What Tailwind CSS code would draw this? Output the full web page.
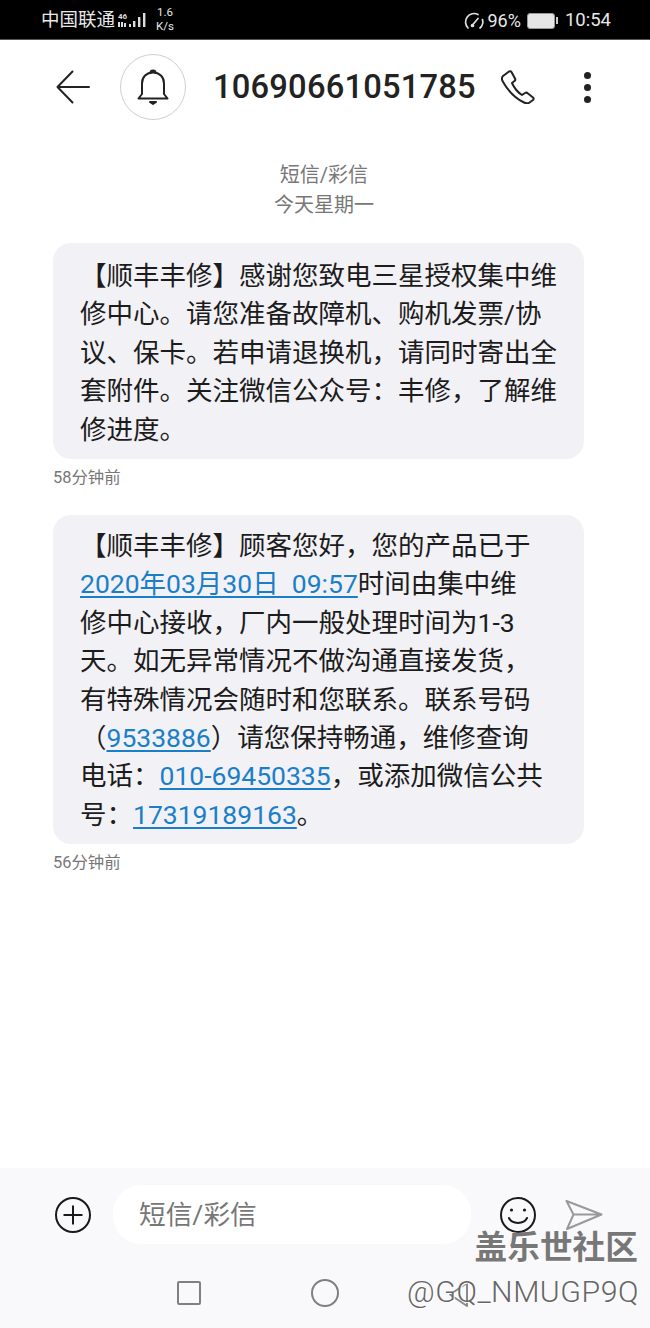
<!DOCTYPE html>
<html lang="zh">
<head>
<meta charset="utf-8">
<script src="https://cdn.jsdelivr.net/npm/@tailwindcss/browser@4"></script>
</head>
<body class="m-0 bg-white">
<div class="relative w-[650px] h-[1328px] flex flex-col overflow-hidden bg-white text-[#1c1c1c] font-['Roboto','Noto_Sans_CJK_SC',sans-serif]">
  <!-- status bar -->
  <div class="h-10 shrink-0 bg-black border-b border-[#555] flex items-center text-[#e8e8e8] pl-[41px] pr-[39px] pt-[2px]">
    <span class="text-[18.5px] leading-none">中国联通</span>
    <svg class="ml-[3px]" width="29" height="20" viewBox="0 0 29 20" fill="#ddd"><text x="0" y="8" font-size="8" font-weight="700" font-family="Roboto">46</text><rect x="0" y="11" width="2" height="5"/><rect x="3" y="11" width="2" height="5"/><rect x="6" y="12" width="2" height="4"/><rect x="11" y="13" width="2" height="3"/><rect x="15" y="10" width="2.4" height="6"/><rect x="20" y="6" width="2.4" height="10"/><rect x="25" y="2" width="2.4" height="14"/></svg>
    <div class="ml-[9px] flex flex-col items-center text-[11.5px] leading-[14px] mt-[-3px]"><span>1.6</span><span>K/s</span></div>
    <div class="ml-auto flex items-center">
      <svg width="21" height="18" viewBox="0 0 21 18" fill="none" stroke="#e0e0e0" stroke-width="1.7" stroke-linecap="round"><path d="M4 16 A8.5 8.5 0 0 1 14 2.5"/><path d="M18.5 7.5 A8.5 8.5 0 0 1 16 16"/><path d="M8.5 13 L14 6.5"/><circle cx="8.5" cy="13.5" r="1" fill="#e0e0e0"/></svg>
      <span class="text-[18px] leading-none ml-[3px]">96%</span>
      <div class="ml-[6px] w-[28px] h-[16px] rounded-[3px] border border-[#999] bg-[#e6e6e6]"></div>
      <div class="ml-[1px] w-[2px] h-[7px] bg-[#ccc]"></div>
      <span class="text-[18.5px] leading-none ml-[7px]">10:54</span>
    </div>
  </div>
  <!-- header -->
  <div class="h-[94px] shrink-0 flex items-center relative pl-[56px]">
    <svg width="34" height="34" viewBox="0 0 34 34" fill="none" stroke="#222" stroke-width="2" stroke-linecap="round" stroke-linejoin="round"><path d="M33 17 H1.5 M16.5 1.5 L1.5 17 L16.5 32.5"/></svg>
    <div class="ml-[30px] w-[66px] h-[66px] rounded-full border border-[#cfcfcf] flex items-center justify-center">
      <svg width="32" height="36" viewBox="0 0 32 36" fill="none" stroke="#222" stroke-width="2" stroke-linejoin="round" stroke-linecap="round"><path d="M1.5 29.5 H30.5 L27 25 V14.5 C27 8 22.5 3.5 16 3.5 C9.5 3.5 5 8 5 14.5 V25 Z"/><path d="M13.5 3.5 C13.5 0.8 18.5 0.8 18.5 3.5" fill="#222"/><path d="M13 33 H19 L16 35 Z" fill="#222"/></svg>
    </div>
    <span class="ml-[27px] text-[32.7px] leading-none font-medium tracking-[0.2px] text-[#222]">10690661051785</span>
    <svg class="ml-[24px]" width="35" height="34" viewBox="0 0 35 34" fill="none" stroke="#222" stroke-width="2" stroke-linejoin="round"><path d="M3 6 L9 1.5 C10 1 11 1.2 11.5 2 L15 8.5 C15.5 9.5 15.2 10.5 14.5 11 L12 13 C14 17.5 18 22.5 22 25 L25 23 C26 22.4 27 22.6 27.7 23.3 L33 27.5 C33.7 28.2 33.7 29.3 33 30 L29.5 32.5 C28 33.5 26 33.5 24 32.5 C15 28 7.5 20 2.5 11 C1.7 9 1.8 7 3 6 Z"/></svg>
    <div class="ml-[49px] flex flex-col gap-[5px]"><i class="block w-[7px] h-[7px] rounded-full bg-[#222]"></i><i class="block w-[7px] h-[7px] rounded-full bg-[#222]"></i><i class="block w-[7px] h-[7px] rounded-full bg-[#222]"></i></div>
  </div>
  <!-- messages -->
  <main class="flex-1 flex flex-col items-start pl-[53px] pr-[66px]">
    <div class="self-stretch text-center text-[#777] text-[20px] leading-[30px] pt-[25px] pl-[11px]">
      <div class="pt-[1px]">短信/彩信</div>
      <div>今天星期一</div>
    </div>
    <div class="mt-[23px] w-[531px] h-[216px] rounded-[18px] bg-[#f2f1f5] pl-[27px] pt-[14px] text-[26.5px] leading-[38.4px] whitespace-nowrap">
      <div>【顺丰丰修】感谢您致电三星授权集中维</div>
      <div>修中心。请您准备故障机、购机发票/协</div>
      <div>议、保卡。若申请退换机，请同时寄出全</div>
      <div>套附件。关注微信公众号：丰修，了解维</div>
      <div>修进度。</div>
    </div>
    <div class="mt-[9px] text-[16.4px] leading-[20px] text-[#777]">58分钟前</div>
    <div class="mt-[27px] w-[531px] h-[329px] rounded-[18px] bg-[#f2f1f5] pl-[27px] pt-[12px] text-[26.5px] leading-[38.4px] whitespace-nowrap">
      <div>【顺丰丰修】顾客您好，您的产品已于</div>
      <div><a class="text-[#1a7fc9] underline underline-offset-[3px]">2020年03月30日&nbsp;&nbsp;09:57</a>时间由集中维</div>
      <div>修中心接收，厂内一般处理时间为1-3</div>
      <div>天。如无异常情况不做沟通直接发货，</div>
      <div>有特殊情况会随时和您联系。联系号码</div>
      <div>（<a class="text-[#1a7fc9] underline underline-offset-[3px]">9533886</a>）请您保持畅通，维修查询</div>
      <div>电话：<a class="text-[#1a7fc9] underline underline-offset-[3px]">010-69450335</a>，或添加微信公共</div>
      <div>号：<a class="text-[#1a7fc9] underline underline-offset-[3px]">17319189163</a>。</div>
    </div>
    <div class="mt-[9px] text-[16.4px] leading-[20px] text-[#777]">56分钟前</div>
  </main>
  <!-- footer -->
  <div class="h-[160px] shrink-0 bg-[#f9f8fb] flex flex-col">
    <div class="h-[59px] mt-[17px] flex items-center pl-[55px]">
      <svg width="36" height="36" viewBox="0 0 36 36" fill="none" stroke="#1a1a1a" stroke-width="2"><circle cx="18" cy="18" r="17"/><path d="M8.5 18 H27.5 M18 8.5 V27.5"/></svg>
      <div class="ml-[22px] w-[358px] h-[59px] rounded-[28px] bg-white flex items-center pl-[26px] pt-[2px] text-[26.7px] text-[#777]">短信/彩信</div>
      <svg class="ml-[29px]" width="36" height="36" viewBox="0 0 36 36" fill="none" stroke="#1a1a1a" stroke-width="2" stroke-linecap="round"><circle cx="18" cy="18" r="17"/><circle cx="11.5" cy="13" r="1.6" fill="#1a1a1a" stroke="none"/><circle cx="24.5" cy="13" r="1.6" fill="#1a1a1a" stroke="none"/><path d="M9 21 C12 27.5 24 27.5 27 21"/></svg>
      <svg class="ml-[29px]" width="38" height="32" viewBox="0 0 38 32" fill="none" stroke="#999" stroke-width="2" stroke-linejoin="round"><path d="M1.5 2 L36.5 15.5 L2 30 L8.5 15.5 Z M8.5 15.5 H36.5"/></svg>
    </div>
    <div class="flex-1 flex items-center pl-[177px] pt-[14px]">
      <div class="w-[24px] h-[24px] rounded-[2px] border-2 border-[#808080]"></div>
      <div class="ml-[110px] w-[28px] h-[28px] rounded-full border-2 border-[#808080]"></div>
    </div>
  </div>
  <!-- nav back triangle + watermark -->
  <svg class="absolute left-[446px] top-[1281px]" width="27" height="27" viewBox="0 0 27 27" fill="none" stroke="#8a8a8a" stroke-width="2" stroke-linejoin="round"><path d="M21 2 L4 13.5 L21 25 Z"/></svg>
  <div class="absolute right-[12px] top-[1232px] text-[32.7px] leading-none font-bold text-[#777] [text-shadow:1px_1px_0_#fff]">盖乐世社区</div>
  <div class="absolute right-[11px] top-[1277px] text-[30.3px] leading-none tracking-[0.5px] font-light text-[#666] [text-shadow:1px_1px_0_#fff]">@GQ_NMUGP9Q</div>
</div>
</body>
</html>
